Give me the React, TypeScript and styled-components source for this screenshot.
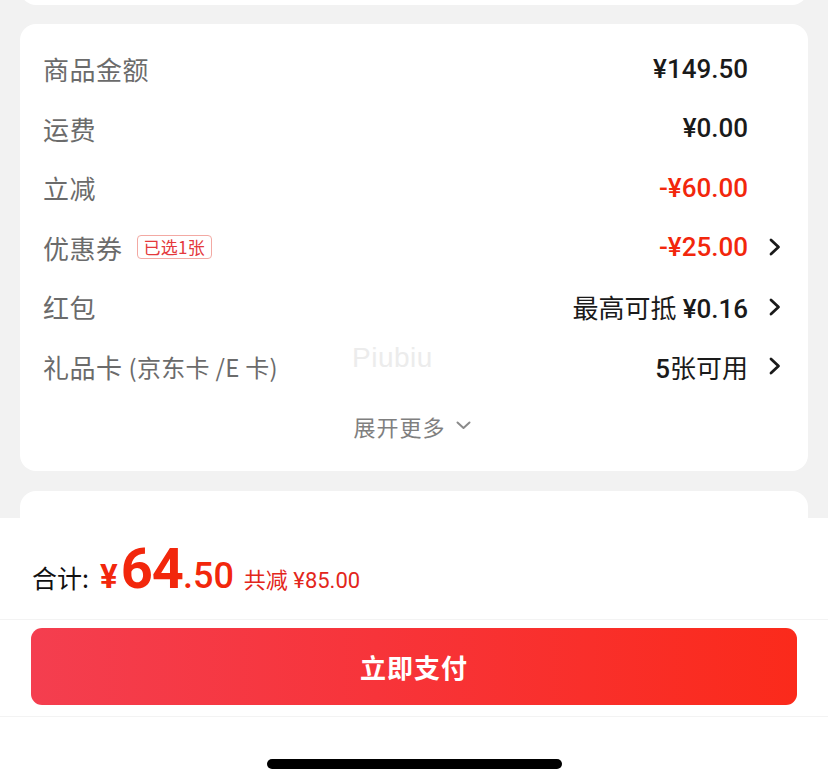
import React from "react";
import styled, { createGlobalStyle } from "styled-components";

const GlobalStyle = createGlobalStyle`
  html, body { margin: 0; padding: 0; background: #f2f2f2; }
  body { font-family: "Noto Sans CJK SC", "Noto Sans", sans-serif; }
  * { box-sizing: border-box; }
`;

const RED = "#f2270c";

const Page = styled.div`
  width: 828px;
  height: 784px;
  display: flex;
  flex-direction: column;
  overflow: hidden;
  background: #f2f2f2;
`;

const Scroll = styled.div`
  flex: 1;
  min-height: 0;
  overflow: hidden;
  padding: 0 20px;
  display: flex;
  flex-direction: column;
`;

const Card = styled.div<{ $h?: number; $mt?: number }>`
  background: #fff;
  border-radius: 16px;
  position: relative;
  flex-shrink: 0;
  ${(p) => (p.$h ? `height: ${p.$h}px;` : "")}
  ${(p) => (p.$mt !== undefined ? `margin-top: ${p.$mt}px;` : "")}
`;

const PriceCard = styled(Card)`
  padding: 15px 27px 13px 23px;
  display: flex;
  flex-direction: column;
`;

const Row = styled.div`
  height: 59.5px;
  display: flex;
  align-items: center;
`;

const Label = styled.div`
  font-size: 26px;
  color: #6b6b6b;
  display: flex;
  align-items: center;
  letter-spacing: 0.5px;
`;

const SubLabel = styled.span`
  font-size: 24px;
  margin-left: 6px;
  letter-spacing: 0.3px;
`;

const Badge = styled.span`
  margin-left: 14px;
  height: 24px;
  padding: 0 6px;
  border: 1px solid #f3a9a3;
  border-radius: 4px;
  color: #e4393c;
  font-size: 17px;
  line-height: 22px;
  display: inline-flex;
  align-items: center;
  letter-spacing: 0.3px;
`;

const Value = styled.div<{ $red?: boolean }>`
  margin-left: auto;
  font-family: "Roboto", "Noto Sans CJK SC", sans-serif;
  font-weight: 500;
  font-size: 26px;
  color: ${(p) => (p.$red ? RED : "#1a1a1a")};
`;

const Cjk = styled.span<{ $mr?: number }>`
  font-family: "Noto Sans CJK SC", sans-serif;
  font-weight: 400;
  margin-right: ${(p) => (p.$mr ?? 6)}px;
`;

const ChevronSlot = styled.div`
  width: 33px;
  height: 20px;
  display: flex;
  justify-content: flex-end;
  align-items: center;
  flex-shrink: 0;
`;

const Expand = styled.div`
  height: 62px;
  padding-bottom: 3px;
  display: flex;
  align-items: center;
  justify-content: center;
  gap: 10px;
  font-size: 22px;
  color: #7f7f7f;
  letter-spacing: 1px;
`;

const Watermark = styled.div`
  position: absolute;
  left: 332px;
  top: 318px;
  font-family: "Liberation Sans", sans-serif;
  font-size: 28px;
  color: #ececec;
  letter-spacing: 0.5px;
`;

const Gap = styled.div<{ $h: number }>`
  height: ${(p) => p.$h}px;
  flex-shrink: 0;
`;

const Bottom = styled.div`
  height: 266px;
  flex-shrink: 0;
  background: #fff;
  display: flex;
  flex-direction: column;
`;

const TotalRow = styled.div`
  height: 102px;
  padding-left: 32px;
  padding-top: 23px;
  display: flex;
  align-items: baseline;
  border-bottom: 1px solid #f3f3f3;
  line-height: 1;
`;

const TotalLabel = styled.span`
  font-size: 25px;
  color: #111;
  margin-right: 11px;
`;

const Yen = styled.span`
  font-family: "Roboto", sans-serif;
  font-weight: 700;
  font-size: 33px;
  color: ${RED};
  margin-right: 3px;
`;

const BigNum = styled.span`
  font-family: "Roboto", sans-serif;
  font-weight: 700;
  font-size: 56px;
  color: ${RED};
  letter-spacing: -1px;
`;

const Decimal = styled.span`
  font-family: "Roboto", sans-serif;
  font-weight: 500;
  font-size: 36px;
  color: ${RED};
  margin-right: 10px;
`;

const Saved = styled.span`
  font-family: "Roboto", "Noto Sans CJK SC", sans-serif;
  font-size: 22px;
  color: #e3261b;
`;

const ButtonArea = styled.div`
  padding: 8px 31px 11px;
  border-bottom: 1px solid #f3f3f3;
`;

const PayButton = styled.button`
  width: 100%;
  height: 77px;
  border: none;
  border-radius: 11px;
  background: linear-gradient(90deg, #f43e4f 0%, #f7343a 45%, #fb2a1b 100%);
  color: #fff;
  font-family: "Noto Sans CJK SC", sans-serif;
  font-size: 26px;
  font-weight: 700;
  letter-spacing: 1px;
  display: flex;
  align-items: center;
  justify-content: center;
`;

const HomeArea = styled.div`
  flex: 1;
  display: flex;
  justify-content: center;
  padding-top: 42px;
`;

const HomeBar = styled.div`
  width: 295px;
  height: 10px;
  border-radius: 5px;
  background: #000;
`;

const ChevronRight = () => (
  <svg width="12" height="18" viewBox="0 0 12 18">
    <path d="M2 2 L9.5 9 L2 16" fill="none" stroke="#1a1a1a" strokeWidth="2.8" strokeLinecap="round" strokeLinejoin="round" />
  </svg>
);

const ChevronDown = () => (
  <svg width="15" height="9" viewBox="0 0 15 9">
    <path d="M1.5 1.5 L7.5 7 L13.5 1.5" fill="none" stroke="#8a8a8a" strokeWidth="2" strokeLinecap="round" strokeLinejoin="round" />
  </svg>
);

type RowData = {
  label: React.ReactNode;
  value: React.ReactNode;
  red?: boolean;
  arrow?: boolean;
};

const rows: RowData[] = [
  { label: "商品金额", value: "¥149.50" },
  { label: "运费", value: "¥0.00" },
  { label: "立减", value: "-¥60.00", red: true },
  {
    label: (
      <>
        优惠券<Badge>已选1张</Badge>
      </>
    ),
    value: "-¥25.00",
    red: true,
    arrow: true,
  },
  {
    label: "红包",
    value: (
      <>
        <Cjk>最高可抵</Cjk>¥0.16
      </>
    ),
    arrow: true,
  },
  {
    label: (
      <>
        礼品卡<SubLabel>(京东卡 /E 卡)</SubLabel>
      </>
    ),
    value: (
      <>
        5<Cjk $mr={0}>张可用</Cjk>
      </>
    ),
    arrow: true,
  },
];

export default function App() {
  return (
    <>
      <GlobalStyle />
      <Page>
        <Scroll>
          <Card $h={45} $mt={-40} />
          <Gap $h={19} />
          <PriceCard>
            {rows.map((r, i) => (
              <Row key={i}>
                <Label>{r.label}</Label>
                <Value $red={r.red}>{r.value}</Value>
                <ChevronSlot>{r.arrow && <ChevronRight />}</ChevronSlot>
              </Row>
            ))}
            <Expand>
              展开更多
              <ChevronDown />
            </Expand>
            <Watermark>Piubiu</Watermark>
          </PriceCard>
          <Gap $h={20} />
          <Card $h={200} />
        </Scroll>
        <Bottom>
          <TotalRow>
            <TotalLabel>合计:</TotalLabel>
            <Yen>¥</Yen>
            <BigNum>64</BigNum>
            <Decimal>.50</Decimal>
            <Saved>共减 ¥85.00</Saved>
          </TotalRow>
          <ButtonArea>
            <PayButton>立即支付</PayButton>
          </ButtonArea>
          <HomeArea>
            <HomeBar />
          </HomeArea>
        </Bottom>
      </Page>
    </>
  );
}
